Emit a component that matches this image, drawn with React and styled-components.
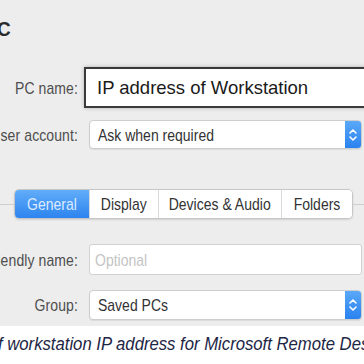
import styled, { createGlobalStyle } from "styled-components";

const Global = createGlobalStyle`
  body {
    margin: 0;
    background: #fff;
    font-family: "Liberation Sans", Arial, sans-serif;
  }
`;

const Window = styled.div`
  background: #ededed;
  height: 326px;
  box-sizing: border-box;
  padding-top: 19px;
  overflow: hidden;
`;

const Heading = styled.h1`
  margin: 0 0 0 -3px;
  font-size: 19px;
  line-height: 19px;
  font-weight: bold;
  color: #2b2b2b;
  span {
    display: inline-block;
    transform: scaleY(1.1);
  }
`;

const Field = styled.div`
  display: grid;
  grid-template-columns: 78px 1fr;
  column-gap: ${(p) => p.$gap || 11}px;
  align-items: center;
  margin-top: ${(p) => p.$top || 0}px;
  margin-right: ${(p) => (p.$bleed ? -12 : 2)}px;
`;

const Label = styled.div`
  display: flex;
  justify-content: flex-end;
  white-space: nowrap;
  font-size: 14px;
  letter-spacing: 0.1px;
  color: #4e4e4e;
  span {
    display: inline-block;
    transform: scaleY(1.15);
  }
`;

const BigInput = styled.div`
  height: 41px;
  box-sizing: border-box;
  border: 2px solid #3a3a3a;
  background: #fff;
  box-shadow: 0 0 4px rgba(0, 0, 0, 0.25);
  display: flex;
  align-items: center;
  padding-left: 11px;
  font-size: 18.5px;
  color: #1a1a1a;
  white-space: nowrap;
`;

const TextBox = styled.div`
  height: 31px;
  box-sizing: border-box;
  border: 1px solid #d2d2d2;
  border-radius: 3px;
  background: #fff;
  display: flex;
  align-items: center;
  padding-left: 5px;
  font-size: 14px;
  color: ${(p) => (p.$placeholder ? "#c4c4c4" : "#333")};
  span {
    display: inline-block;
    transform: scaleY(1.15);
  }
`;

const Select = styled.div`
  height: ${(p) => p.$h || 30}px;
  box-sizing: border-box;
  border: 1px solid #cdcdcd;
  border-radius: 4px;
  background: #fff;
  display: flex;
  align-items: stretch;
  overflow: hidden;
  box-shadow: 0 1px 1px rgba(0, 0, 0, 0.08);
`;

const SelectText = styled.div`
  flex: 1;
  display: flex;
  align-items: center;
  padding-left: 8px;
  font-size: 14px;
  color: #333;
  span {
    display: inline-block;
    transform: scaleY(1.15);
  }
`;

const Stepper = styled.div`
  width: 16px;
  background: linear-gradient(#5aa8f8, #2a82ef);
  display: flex;
  align-items: center;
  justify-content: center;
`;

const TabBar = styled.div`
  display: flex;
  align-items: center;
  margin-top: 40px;
`;

const Rule = styled.div`
  height: 1px;
  background: #cfcfcf;
  flex: ${(p) => (p.$grow ? 1 : "0 0 14px")};
`;

const Segmented = styled.div`
  display: flex;
  height: 30px;
  box-sizing: border-box;
  border: 1px solid #c6c6c6;
  border-radius: 5px;
  background: #fff;
  overflow: hidden;
  box-shadow: 0 1px 2px rgba(0, 0, 0, 0.12);
`;

const Tab = styled.div`
  padding: 0 ${(p) => p.$pad || 12}px;
  display: flex;
  align-items: center;
  font-size: 14px;
  color: ${(p) => (p.$active ? "#dcebff" : "#333")};
  background: ${(p) => (p.$active ? "linear-gradient(#62adf9, #2d84ef)" : "#fff")};
  border-left: ${(p) => (p.$first ? "none" : "1px solid #dadada")};
  span {
    display: inline-block;
    transform: scaleY(1.15);
  }
`;

const Caption = styled.p`
  margin: 0;
  padding-top: 8px;
  white-space: nowrap;
  overflow: hidden;
  font-size: 16.7px;
  font-style: italic;
  color: #1d2645;
  text-indent: -1px;
  span {
    display: inline-block;
    transform: scaleY(1.12);
  }
`;

function Arrows() {
  return (
    <svg width="10" height="16" viewBox="0 0 10 16">
      <path d="M2 6 L5 3 L8 6 M2 10 L5 13 L8 10" fill="none" stroke="#fff" strokeWidth="1.6" strokeLinecap="round" strokeLinejoin="round" />
    </svg>
  );
}

const tabs = [
  { name: "General", pad: 12 },
  { name: "Display", pad: 11 },
  { name: "Devices & Audio", pad: 10 },
  { name: "Folders", pad: 12 },
];

export default function App() {
  return (
    <>
      <Global />
      <Window>
        <Heading><span>C</span></Heading>
        <Field $top={29} $gap={6} $bleed>
          <Label><span>PC name:</span></Label>
          <BigInput>IP address of Workstation</BigInput>
        </Field>
        <Field $top={12}>
          <Label><span>User account:</span></Label>
          <Select $h={29}>
            <SelectText><span>Ask when required</span></SelectText>
            <Stepper><Arrows /></Stepper>
          </Select>
        </Field>
        <TabBar>
          <Rule />
          <Segmented>
            {tabs.map((t, i) => (
              <Tab key={t.name} $active={i === 0} $first={i === 0} $pad={t.pad}>
                <span>{t.name}</span>
              </Tab>
            ))}
          </Segmented>
          <Rule $grow />
        </TabBar>
        <Field $top={25}>
          <Label><span>Friendly name:</span></Label>
          <TextBox $placeholder><span>Optional</span></TextBox>
        </Field>
        <Field $top={15}>
          <Label><span>Group:</span></Label>
          <Select>
            <SelectText><span>Saved PCs</span></SelectText>
            <Stepper><Arrows /></Stepper>
          </Select>
        </Field>
      </Window>
      <Caption>
        <span>f workstation IP address for Microsoft Remote Desktop</span>
      </Caption>
    </>
  );
}
